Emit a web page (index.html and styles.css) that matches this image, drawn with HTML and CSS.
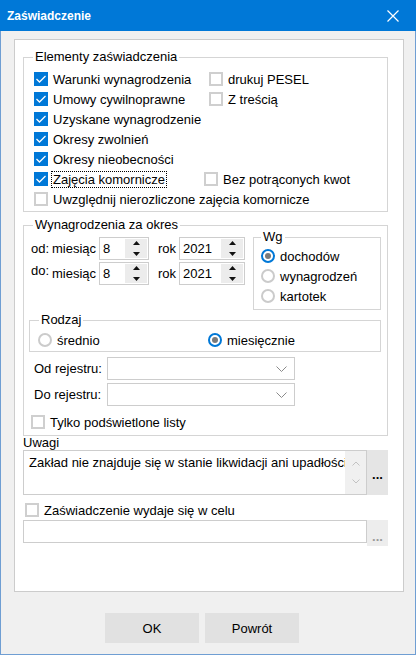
FILE: index.html
```html
<!DOCTYPE html>
<html lang="pl">
<head>
  <meta charset="UTF-8" />
  <meta name="viewport" content="width=device-width, initial-scale=1.0" />
  <title>Zaświadczenie</title>
  <link rel="stylesheet" href="styles.css">
</head>
<body>
  <div class="window">
    <div class="titlebar">
      <span class="title">Zaświadczenie</span>
      <svg class="close" width="12" height="12" viewBox="0 0 12 12"><path d="M0.5 0.5 L11.5 11.5 M11.5 0.5 L0.5 11.5" stroke="#fff" stroke-width="1.2" fill="none"/></svg>
    </div>

    <div class="content">
      <div class="panel">

        <fieldset class="group">
          <legend>Elementy zaświadczenia</legend>
          <div class="elements">
            <label class="check"><span class="cb on"></span>Warunki wynagrodzenia</label>
            <label class="check"><span class="cb"></span>drukuj PESEL</label>
            <label class="check"><span class="cb on"></span>Umowy cywilnoprawne</label>
            <label class="check"><span class="cb"></span>Z treścią</label>
            <label class="check wide"><span class="cb on"></span>Uzyskane wynagrodzenie</label>
            <label class="check wide"><span class="cb on"></span>Okresy zwolnień</label>
            <label class="check wide"><span class="cb on"></span>Okresy nieobecności</label>
            <label class="check"><span class="cb on"></span><span class="focus">Zajęcia komornicze</span></label>
            <label class="check shift"><span class="cb"></span>Bez potrąconych kwot</label>
            <label class="check wide"><span class="cb"></span>Uwzględnij nierozliczone zajęcia komornicze</label>
          </div>
        </fieldset>

        <fieldset class="group period">
          <legend>Wynagrodzenia za okres</legend>
          <div class="period-top">
            <div class="spinners">
              <div class="sp-row">
                <span class="sp-lbl">od:</span>
                <span class="sp-name">miesiąc</span>
                <div class="spin small"><span class="spin-val">8</span><span class="spin-btns"><svg width="9" height="17" viewBox="0 0 9 17"><path d="M4.5 1 L8 5 L1 5 Z M1 12 L8 12 L4.5 16 Z" fill="#111"/></svg></span></div>
                <span class="sp-rok">rok</span>
                <div class="spin big"><span class="spin-val">2021</span><span class="spin-btns"><svg width="9" height="17" viewBox="0 0 9 17"><path d="M4.5 1 L8 5 L1 5 Z M1 12 L8 12 L4.5 16 Z" fill="#111"/></svg></span></div>
              </div>
              <div class="sp-row">
                <span class="sp-lbl raised">do:</span>
                <span class="sp-name">miesiąc</span>
                <div class="spin small"><span class="spin-val">8</span><span class="spin-btns"><svg width="9" height="17" viewBox="0 0 9 17"><path d="M4.5 1 L8 5 L1 5 Z M1 12 L8 12 L4.5 16 Z" fill="#111"/></svg></span></div>
                <span class="sp-rok">rok</span>
                <div class="spin big"><span class="spin-val">2021</span><span class="spin-btns"><svg width="9" height="17" viewBox="0 0 9 17"><path d="M4.5 1 L8 5 L1 5 Z M1 12 L8 12 L4.5 16 Z" fill="#111"/></svg></span></div>
              </div>
            </div>

            <fieldset class="group wg">
              <legend>Wg</legend>
              <div class="wg-list">
                <label class="check"><span class="rb on"></span>dochodów</label>
                <label class="check"><span class="rb"></span>wynagrodzeń</label>
                <label class="check"><span class="rb"></span>kartotek</label>
              </div>
            </fieldset>
          </div>

          <fieldset class="group rodzaj">
            <legend>Rodzaj</legend>
            <div class="rodzaj-row">
              <label class="check"><span class="rb"></span>średnio</label>
              <label class="check"><span class="rb on"></span>miesięcznie</label>
            </div>
          </fieldset>

          <div class="reg-row first">
            <span class="reg-lbl">Od rejestru:</span>
            <div class="combo"><svg width="11" height="6" viewBox="0 0 11 6"><polyline points="0.5,0.5 5.5,5.5 10.5,0.5" stroke="#8a8a8a" fill="none"/></svg></div>
          </div>
          <div class="reg-row">
            <span class="reg-lbl">Do rejestru:</span>
            <div class="combo"><svg width="11" height="6" viewBox="0 0 11 6"><polyline points="0.5,0.5 5.5,5.5 10.5,0.5" stroke="#8a8a8a" fill="none"/></svg></div>
          </div>

          <label class="check only-lit"><span class="cb"></span>Tylko podświetlone listy</label>
        </fieldset>

        <div class="notes-lbl">Uwagi</div>
        <div class="memo-row">
          <div class="memo">
            <div class="memo-text">Zakład nie znajduje się w stanie likwidacji ani upadłości</div>
            <div class="memo-scroll">
              <svg width="8" height="5" viewBox="0 0 8 5"><polyline points="0.5,4.5 4,1 7.5,4.5" stroke="#c2c2c2" fill="none"/></svg>
              <svg width="8" height="5" viewBox="0 0 8 5"><polyline points="0.5,0.5 4,4 7.5,0.5" stroke="#c2c2c2" fill="none"/></svg>
            </div>
          </div>
          <div class="dots">...</div>
        </div>

        <label class="check purpose"><span class="cb"></span>Zaświadczenie wydaje się w celu</label>
        <div class="input-row">
          <div class="input"></div>
          <div class="dots off">...</div>
        </div>

      </div>

      <div class="buttons">
        <button>OK</button>
        <button>Powrót</button>
      </div>
    </div>
  </div>
</body>
</html>
```

FILE: styles.css
```css
body {
  margin: 0;
  font-family: "Segoe UI", "Liberation Sans", Arial, sans-serif;
  font-size: 13px;
  color: #000;
  background: #f0f0f0;
}
.window {
  width: 416px;
  height: 655px;
  box-sizing: border-box;
  border: 1px solid #6f9ed3;
  border-top: none;
  background: #f0f0f0;
}
.titlebar {
  height: 31px;
  margin: 0 -1px;
  background: #0078d7;
  display: flex;
  align-items: center;
  justify-content: space-between;
  padding: 0 17px 0 7px;
}
.title {
  color: #fff;
  font-size: 12px;
  font-weight: bold;
}
.content {
  padding: 8px 0 0 13px;
}
.panel {
  width: 390px;
  height: 553px;
  box-sizing: border-box;
  background: #fff;
  border: 1px solid #cccccc;
  padding: 9px 15px 0 8px;
}

/* group boxes */
.group {
  margin: 0;
  padding: 0;
  min-width: 0;
  border: 1px solid #d5d5d5;
}
.group legend {
  margin-left: 9px;
  padding: 0 2px;
  line-height: 16px;
}
.elements {
  display: grid;
  grid-template-columns: 175px 1fr;
  padding: 4px 0 2px 10px;
}
.check {
  display: flex;
  align-items: center;
  height: 20px;
  white-space: nowrap;
}
.wide { grid-column: 1 / 3; }
.shift { margin-left: -5px; }
.focus {
  outline: 1px dotted #000;
  padding: 0 1px;
  margin-left: -1px;
  line-height: 15px;
}

.cb {
  width: 14px;
  height: 14px;
  box-sizing: border-box;
  border: 2px solid #cfcfcf;
  background: #fff;
  margin-right: 5px;
  flex: none;
}
.cb.on {
  border: none;
  background: #0078d7 url("data:image/svg+xml,%3Csvg xmlns='http://www.w3.org/2000/svg' width='14' height='14'%3E%3Cpolyline points='2.5,7 5.5,10 11.5,4' stroke='white' stroke-width='1.3' fill='none'/%3E%3C/svg%3E") no-repeat;
}
.rb {
  width: 14px;
  height: 14px;
  box-sizing: border-box;
  border: 2px solid #cbcbcb;
  border-radius: 50%;
  background: #fff;
  margin-right: 5px;
  flex: none;
  display: flex;
  align-items: center;
  justify-content: center;
}
.rb.on { border-color: #0078d7; }
.rb.on::after {
  content: "";
  width: 6px;
  height: 6px;
  border-radius: 50%;
  background: #7a7a7a;
}

/* period */
.period {
  margin-top: 5px;
  padding: 0 0 3px 0;
}
.period-top {
  display: flex;
  margin-top: -4px;
}
.spinners {
  margin-top: 8px;
  padding-left: 7px;
  display: flex;
  flex-direction: column;
  gap: 2px;
}
.sp-row {
  display: flex;
  align-items: center;
  height: 23px;
}
.sp-lbl { width: 21px; }
.raised { position: relative; top: -3px; }
.sp-name { width: 47px; }
.sp-rok { width: 21px; margin-left: 9px; }
.spin {
  display: flex;
  height: 23px;
  box-sizing: border-box;
  border: 1px solid #cdcdcd;
}
.spin.small { width: 50px; }
.spin.big { width: 66px; }
.spin-val {
  flex: 1;
  padding-left: 3px;
  line-height: 21px;
}
.spin-btns {
  width: 22px;
  margin: 1px;
  background: #ececec;
  display: flex;
  align-items: center;
  justify-content: center;
}
.wg {
  width: 128px;
  box-sizing: border-box;
  margin: 0 6px 0 auto;
}
.wg legend { margin-left: 7px; }
.wg-list { padding: 1px 0 3px 7px; }

.rodzaj {
  margin: 2px 6px 0 5px;
}
.rodzaj-row {
  display: grid;
  grid-template-columns: 170px 1fr;
  padding: 2px 0 1px 8px;
}

.reg-row {
  display: flex;
  align-items: center;
  margin-top: 3px;
  padding-left: 10px;
}
.reg-row.first { margin-top: 5px; }
.reg-lbl { width: 73px; }
.combo {
  width: 188px;
  height: 23px;
  box-sizing: border-box;
  border: 1px solid #cdcdcd;
  display: flex;
  align-items: center;
  justify-content: flex-end;
  padding-right: 7px;
}
.only-lit {
  margin-top: 6px;
  padding-left: 7px;
}

/* notes */
.notes-lbl {
  line-height: 14px;
}
.memo-row, .input-row {
  display: flex;
  align-items: flex-start;
}
.memo {
  width: 344px;
  height: 45px;
  box-sizing: border-box;
  border: 1px solid #cdcdcd;
  display: flex;
}
.memo-text {
  flex: 1;
  overflow: hidden;
  white-space: nowrap;
  padding: 4px 0 0 5px;
}
.memo-scroll {
  width: 21px;
  background: #f0f0f0;
  display: flex;
  flex-direction: column;
  align-items: center;
  justify-content: space-around;
  padding: 4px 0;
}
.dots {
  width: 21px;
  height: 45px;
  background: #e5e5e5;
  display: flex;
  align-items: center;
  justify-content: center;
  font-weight: bold;
  padding-top: 4px;
  box-sizing: border-box;
}
.dots.off {
  height: 26px;
  color: #9a9a9a;
  background: #ededed;
  padding-top: 6px;
}
.purpose {
  margin-top: 5px;
  padding-left: 2px;
}
.input {
  width: 344px;
  height: 23px;
  box-sizing: border-box;
  border: 1px solid #cdcdcd;
}

.buttons {
  display: flex;
  gap: 6px;
  padding: 21px 0 0 91px;
}
button {
  width: 94px;
  height: 30px;
  border: none;
  background: #e1e1e1;
  font-family: inherit;
  font-size: 13px;
  color: #000;
}
```
